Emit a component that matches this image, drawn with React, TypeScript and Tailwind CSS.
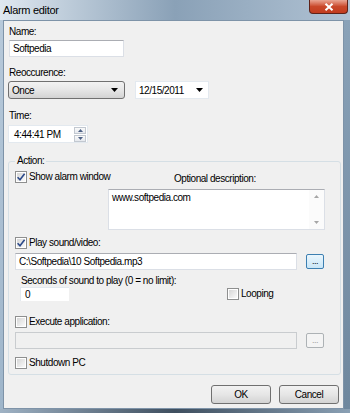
import React from 'react';

function Check({ checked = false }: { checked?: boolean }) {
  return (
    <span className="relative flex h-[12px] w-[12px] shrink-0 items-center justify-center border border-[#8e8f8f] bg-white">
      <span className="absolute inset-[1px] bg-gradient-to-br from-[#d6d6d6] to-[#fafafa]" />
      {checked && (
        <svg width="10" height="10" viewBox="0 0 10 10" className="relative">
          <path d="M1.6 5.2 L4 7.8 L8.6 1.8" fill="none" stroke="#2c4a8a" strokeWidth="1.6" />
        </svg>
      )}
    </span>
  );
}

function CheckRow({ checked, label, className = '' }: { checked?: boolean; label: string; className?: string }) {
  return (
    <div className={`flex h-[12px] items-center gap-[2px] whitespace-nowrap ${className}`}>
      <Check checked={checked} />
      <span className="leading-[12px]">{label}</span>
    </div>
  );
}

function DotsButton({ disabled = false }: { disabled?: boolean }) {
  return (
    <div
      className={`flex h-[15px] w-[18px] items-center justify-center rounded-[2px] border text-[9px] leading-none ${
        disabled
          ? 'border-[#adb2b5] bg-[#f4f4f4] text-[#a0a0a0]'
          : 'border-[#3c7fb1] bg-gradient-to-b from-[#eaf6fd] to-[#c9e6f7] text-black'
      }`}
    >
      ...
    </div>
  );
}

function DownArrow() {
  return (
    <svg width="7" height="4" viewBox="0 0 7 4">
      <path d="M0 0 H7 L3.5 4 Z" fill="#000" />
    </svg>
  );
}

export default function App() {
  return (
    <div
      className="flex h-[413px] w-[350px] flex-col overflow-hidden bg-[#9fb6cc] text-[10px] tracking-[-0.45px] text-black"
      style={{ fontFamily: '"Liberation Sans", Arial, sans-serif' }}
    >
      {/* title bar */}
      <div className="relative flex h-[20px] shrink-0 items-center bg-gradient-to-r from-[#dfe8f0] via-[#8aa1b7] to-[#b0c2d3] pl-[3px]">
        <span className="relative z-10 text-[11px] tracking-[-0.3px] text-black">Alarm editor</span>
        <div className="absolute right-[2px] top-0 flex h-[14px] w-[39px] items-center justify-center rounded-b-[4px] border border-t-0 border-[#5e2218] bg-gradient-to-b from-[#e9a593] via-[#c9482a] to-[#c23c1e]">
          <svg width="10" height="8" viewBox="0 0 10 8">
            <path d="M1.5 0.8 L8.5 7.2 M8.5 0.8 L1.5 7.2" stroke="#fff" strokeWidth="2" />
          </svg>
        </div>
      </div>

      <div className="flex min-h-0 flex-1">
        <div className="w-[3px] bg-gradient-to-b from-[#b7c9da] to-[#9eb5ca]" />
        {/* client area */}
        <div className="flex w-[341px] flex-col border border-[#7e93a8] bg-[#f0f0f0] pl-[5px] pt-[5px]">
          <div className="leading-[12px]">Name:</div>
          <div className="mt-[2px] flex h-[17px] w-[115px] items-center border border-[#dbdfe6] border-t-[#abadb3] bg-white pl-[3px]">
            Softpedia
          </div>

          <div className="mt-[10px] leading-[12px]">Reoccurence:</div>
          <div className="mt-[2px] flex h-[18px] items-center">
            <div className="ml-[-1px] flex h-[18px] w-[117px] items-center justify-between rounded-[3px] border border-[#707070] bg-gradient-to-b from-[#f2f2f2] via-[#e6e6e6] to-[#d3d3d3] pl-[3px] pr-[6px]">
              <span>Once</span>
              <DownArrow />
            </div>
            <div className="ml-[10px] flex h-[18px] w-[74px] items-center justify-between border border-[#e3e9ef] bg-white pl-[3px] pr-[5px]">
              <span>12/15/2011</span>
              <DownArrow />
            </div>
          </div>

          <div className="mt-[11px] leading-[12px]">Time:</div>
          <div className="ml-[-1px] mt-[3px] flex h-[18px] w-[80px] items-center justify-between border border-[#e3e9ef] bg-white pl-[5px] pr-[1px]">
            <span>4:44:41 PM</span>
            <div className="flex flex-col gap-[1px]">
              <div className="flex h-[7px] w-[12px] items-center justify-center border border-[#c2c8d0] bg-gradient-to-b from-[#fafafa] to-[#e6e9ee]">
                <svg width="5" height="3" viewBox="0 0 5 3">
                  <path d="M0 3 H5 L2.5 0 Z" fill="#4d6185" />
                </svg>
              </div>
              <div className="flex h-[7px] w-[12px] items-center justify-center border border-[#c2c8d0] bg-gradient-to-b from-[#fafafa] to-[#e6e9ee]">
                <svg width="5" height="3" viewBox="0 0 5 3">
                  <path d="M0 0 H5 L2.5 3 Z" fill="#4d6185" />
                </svg>
              </div>
            </div>
          </div>

          {/* Action group */}
          <div className="relative ml-[-1px] mt-[18px] flex h-[214px] w-[333px] flex-col rounded-[3px] border border-[#d5dfe5] pl-[6px] pt-[9px]">
            <span className="absolute left-[6px] top-[-7px] bg-[#f0f0f0] px-[2px] leading-[12px]">Action:</span>

            <div className="flex">
              <div className="w-[93px] shrink-0">
                <CheckRow checked label="Show alarm window" />
              </div>
              <div className="flex flex-col">
                <div className="mt-[2px] pl-[66px] leading-[12px]">Optional description:</div>
                <div className="mt-[4px] flex h-[41px] w-[217px] border border-[#dbdfe6] border-t-[#abadb3] bg-white">
                  <div className="flex-1 pl-[3px] pt-[2px] leading-[12px]">www.softpedia.com</div>
                  <div className="flex w-[15px] flex-col items-center justify-between bg-[#fbfbfb] py-[5px]">
                    <svg width="5" height="3" viewBox="0 0 5 3">
                      <path d="M0 3 H5 L2.5 0 Z" fill="#a6a6a6" />
                    </svg>
                    <svg width="5" height="3" viewBox="0 0 5 3">
                      <path d="M0 0 H5 L2.5 3 Z" fill="#a6a6a6" />
                    </svg>
                  </div>
                </div>
              </div>
            </div>

            <CheckRow checked label="Play sound/video:" className="mt-[7px]" />
            <div className="mt-[4px] flex items-center">
              <div className="flex h-[17px] w-[282px] items-center border border-[#dbdfe6] border-t-[#abadb3] bg-white pl-[3px]">
                C:\Softpedia\10 Softpedia.mp3
              </div>
              <div className="ml-[9px]">
                <DotsButton />
              </div>
            </div>

            <div className="ml-[6px] mt-[5px] leading-[12px]">Seconds of sound to play (0 = no limit):</div>
            <div className="flex h-[14px] items-center">
              <div className="ml-[5px] flex h-[14px] w-[49px] items-center border-l border-t border-[#e3e9ef] bg-white pl-[4px]">
                0
              </div>
              <CheckRow label="Looping" className="ml-[158px]" />
            </div>

            <CheckRow label="Execute application:" className="mt-[15px]" />
            <div className="mt-[4px] flex items-center">
              <div className="h-[17px] w-[282px] border border-[#c9cccf] bg-[#f0f0f0]" />
              <div className="ml-[9px]">
                <DotsButton disabled />
              </div>
            </div>

            <CheckRow label="Shutdown PC" className="mt-[8px]" />
          </div>

          <div className="mt-[10px] flex justify-end gap-[8px] pr-[4px]">
            <div className="flex h-[19px] w-[60px] items-center justify-center rounded-[3px] border border-[#707070] bg-gradient-to-b from-[#f2f2f2] via-[#e6e6e6] to-[#d3d3d3]">
              OK
            </div>
            <div className="flex h-[19px] w-[60px] items-center justify-center rounded-[3px] border border-[#707070] bg-gradient-to-b from-[#f2f2f2] via-[#e6e6e6] to-[#d3d3d3]">
              Cancel
            </div>
          </div>
        </div>
        <div className="flex-1 bg-gradient-to-b from-[#8aa2b8] to-[#6e879e]" />
      </div>

      <div className="h-[4px] shrink-0 bg-gradient-to-r from-[#9fb2c4] via-[#3f4f5f] to-[#8aa0b4]" />
    </div>
  );
}
